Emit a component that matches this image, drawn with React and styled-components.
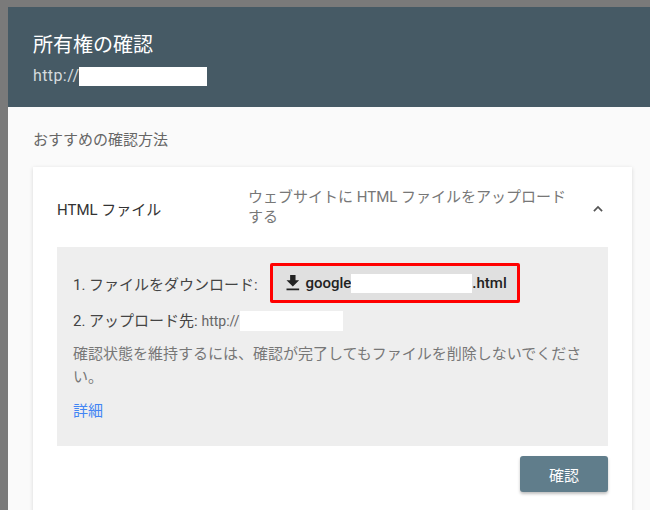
import React from 'react';
import styled, { createGlobalStyle } from 'styled-components';

const GlobalStyle = createGlobalStyle`
    html, body {
        margin: 0;
        padding: 0;
        background: #7a7a7a;
        font-family: Roboto, "Noto Sans CJK JP", sans-serif;
        overflow: hidden;
    }
`;

const DownloadIcon = () => (
    <svg width="22" height="22" viewBox="0 0 24 24" fill="#222">
        <path d="M19 9h-4V3H9v6H5l7 7 7-7zM5 18v2h14v-2H5z" />
    </svg>
);

const ChevronUp = () => (
    <svg width="14" height="14" viewBox="0 0 24 24" fill="none" stroke="#555" strokeWidth="3">
        <path d="M5 15.5l7-7 7 7" />
    </svg>
);

const App = () => {
    return (
        <>
            <GlobalStyle />
            <Dialog>
                <Header>
                    <Title>所有権の確認</Title>
                    <Url>
                        http://
                        <Blank w={128} h={19} />
                    </Url>
                </Header>

                <Body>
                    <SectionLabel>おすすめの確認方法</SectionLabel>
                    <Card>
                        <CardHead>
                            <MethodName>HTML ファイル</MethodName>
                            <MethodDesc>ウェブサイトに HTML ファイルをアップロードする</MethodDesc>
                            <Toggle>
                                <ChevronUp />
                            </Toggle>
                        </CardHead>

                        <Panel>
                            <StepRow>
                                <span>1. ファイルをダウンロード:</span>
                                <Highlight>
                                    <FileButton>
                                        <DownloadIcon />
                                        google
                                        <Blank w={123} h={19} />
                                        .html
                                    </FileButton>
                                </Highlight>
                            </StepRow>
                            <UploadRow>
                                2. アップロード先:&nbsp;
                                <Muted>http://</Muted>
                                <Blank w={103} h={20} />
                            </UploadRow>
                            <Note>
                                確認状態を維持するには、確認が完了してもファイルを削除しないでください。
                            </Note>
                            <MoreLink href="#">詳細</MoreLink>
                        </Panel>

                        <Actions>
                            <VerifyButton>確認</VerifyButton>
                        </Actions>
                    </Card>
                </Body>
            </Dialog>
        </>
    );
};

const Dialog = styled.div`
    margin: 7px 0 0 8px;
    width: 642px;
    height: 503px;
    background: #fafafa;
    overflow: hidden;
`;

const Header = styled.header`
    height: 100px;
    box-sizing: border-box;
    padding: 23px 25px 0;
    background: #465a65;
    color: #fff;
`;

const Title = styled.h1`
    margin: 0;
    font-size: 20px;
    font-weight: 400;
    line-height: 30px;
`;

const Url = styled.div`
    display: flex;
    align-items: center;
    margin-top: 6px;
    font-size: 16px;
    letter-spacing: 0.4px;
    line-height: 20px;
    color: #d5dbde;
`;

const Blank = styled.span`
    display: inline-block;
    width: ${(p) => p.w}px;
    height: ${(p) => p.h}px;
    background: #fff;
`;

const Body = styled.div`
    padding: 23px 18px 0 25px;
`;

const SectionLabel = styled.div`
    font-size: 15px;
    line-height: 20px;
    color: #666;
`;

const Card = styled.section`
    margin-top: 17px;
    height: 400px;
    padding: 0 24px;
    background: #fff;
    box-shadow: 0 1px 4px rgba(0, 0, 0, 0.14);
`;

const CardHead = styled.div`
    display: flex;
    align-items: center;
    height: 80px;
`;

const MethodName = styled.div`
    width: 191px;
    flex-shrink: 0;
    font-size: 15px;
    color: #333;
    padding-top: 3px;
`;

const MethodDesc = styled.div`
    width: 330px;
    font-size: 15px;
    line-height: 20px;
    color: #777;
`;

const Toggle = styled.div`
    display: flex;
    margin-left: auto;
    margin-right: 3px;
    padding-top: 3px;
`;

const Panel = styled.div`
    padding: 16px 16px 23px;
    background: #eeeeee;
    font-size: 15px;
    color: #444;
`;

const StepRow = styled.div`
    display: flex;
    align-items: center;
    gap: 12px;
`;

const Highlight = styled.div`
    border: 3px solid #f00;
    border-radius: 2px;
`;

const FileButton = styled.div`
    display: flex;
    align-items: center;
    width: 244px;
    height: 34px;
    box-sizing: border-box;
    padding: 0 10px 0 9px;
    background: #e0e0e0;
    font-size: 15px;
    font-weight: 500;
    color: #222;

    svg {
        margin-right: 2px;
    }
`;

const UploadRow = styled.div`
    display: flex;
    align-items: center;
    margin-top: 8px;
    line-height: 20px;
`;

const Muted = styled.span`
    font-size: 14px;
    color: #666;
`;

const Note = styled.p`
    margin: 12px 0 0;
    line-height: 23px;
    color: #777;
`;

const MoreLink = styled.a`
    display: inline-block;
    margin-top: 11px;
    line-height: 23px;
    color: #4285f4;
    text-decoration: none;
`;

const Actions = styled.div`
    display: flex;
    justify-content: flex-end;
    margin-top: 10px;
`;

const VerifyButton = styled.button`
    width: 88px;
    height: 36px;
    border: none;
    border-radius: 3px;
    background: #607d8b;
    color: #fff;
    font-family: Roboto, "Noto Sans CJK JP", sans-serif;
    font-size: 15px;
    box-shadow: 0 2px 3px rgba(0, 0, 0, 0.25);
`;

export default App;
